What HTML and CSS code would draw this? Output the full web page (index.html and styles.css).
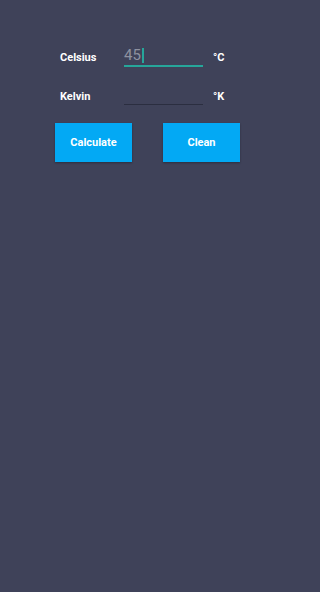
FILE: index.html
```html
<!DOCTYPE html>
<html>
<head>
<meta charset="utf-8">
<link rel="stylesheet" href="styles.css">
</head>
<body>
<main class="screen">
  <div class="row">
    <span class="label">Celsius</span>
    <div class="field focused"><span class="value">45</span><span class="cursor"></span></div>
    <span class="unit">°C</span>
  </div>
  <div class="row row2">
    <span class="label">Kelvin</span>
    <div class="field"></div>
    <span class="unit">°K</span>
  </div>
  <div class="buttons">
    <button class="btn">Calculate</button>
    <button class="btn">Clean</button>
  </div>
</main>
</body>
</html>
```
FILE: styles.css
```css
html, body {
  margin: 0;
  padding: 0;
  background: #3f4259;
  height: 100%;
}
.screen {
  padding: 44px 0 0 60px;
  font-family: Roboto, "Liberation Sans", sans-serif;
  color: #ffffff;
}
.row {
  display: flex;
  align-items: center;
  height: 23px;
}
.row2 {
  margin-top: 16px;
}
.label {
  width: 64px;
  font-size: 11px;
  font-weight: bold;
  padding-top: 4px;
}
.field {
  width: 79px;
  height: 22px;
  box-sizing: border-box;
  border-bottom: 1px solid #2b2e40;
  display: flex;
  align-items: center;
  margin-bottom: 1px;
}
.field.focused {
  height: 23px;
  margin-bottom: 0;
  border-bottom: 2px solid #26a69a;
  padding-top: 2px;
}
.value {
  font-size: 15px;
  color: #8e91a0;
  line-height: 15px;
}
.cursor {
  display: inline-block;
  width: 2px;
  height: 15px;
  background: #26a69a;
  margin-left: 1px;
}
.unit {
  margin-left: 10px;
  font-size: 11px;
  font-weight: bold;
  padding-top: 4px;
}
.buttons {
  display: flex;
  gap: 31px;
  margin: 17px 0 0 -5px;
}
.btn {
  width: 77px;
  height: 39px;
  border: none;
  background: #03a9f4;
  color: #ffffff;
  font-family: Roboto, "Liberation Sans", sans-serif;
  font-size: 11px;
  font-weight: bold;
  padding: 0;
  box-shadow: 0 1px 2px rgba(0,0,0,0.3);
}
```
